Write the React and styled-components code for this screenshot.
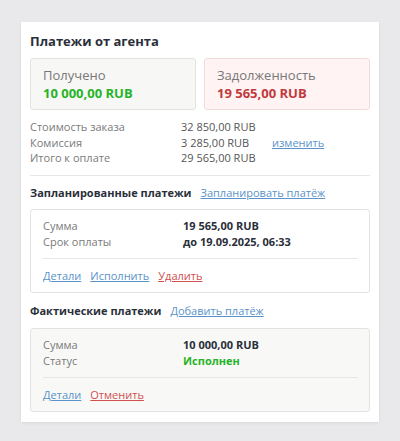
import React from "react";
import styled, {createGlobalStyle} from "styled-components";

const GlobalStyle = createGlobalStyle`
  body {
    margin: 0;
    background: #e9e9eb;
    font-family: "Open Sans", "Liberation Sans", sans-serif;
    color: #333;
  }
`;

const Page = styled.div`
  padding: 22px 21px;
  min-height: 441px;
  box-sizing: border-box;
`;

const Card = styled.div`
  background: #fff;
  width: 358px;
  box-sizing: border-box;
  padding: 10px 9px 10px 9px;
  box-shadow: 0 1px 3px rgba(0, 0, 0, 0.08);
`;

const Title = styled.h2`
  margin: 0 0 8px 0;
  font-size: 13px;
  line-height: 18px;
  font-weight: 700;
  color: #2a2f3a;
`;

const Summary = styled.div`
  display: grid;
  grid-template-columns: 1fr 1fr;
  gap: 8px;
`;

const SummaryBox = styled.div`
  height: 52px;
  box-sizing: border-box;
  padding: 7px 12px;
  border-radius: 3px;
  border: 1px solid ${p => (p.$debt ? "#f1dcdc" : "#e2e4e0")};
  background: ${p => (p.$debt ? "#fff3f3" : "#f7f8f6")};
`;

const SummaryLabel = styled.div`
  font-size: 13px;
  line-height: 18px;
  color: #777;
`;

const SummaryValue = styled.div`
  font-size: 13px;
  line-height: 18px;
  font-weight: 700;
  color: ${p => (p.$debt ? "#c1393c" : "#27b327")};
`;

const Totals = styled.div`
  display: grid;
  grid-template-columns: 151px 91px auto;
  margin-top: 9px;
  font-size: 11px;
  line-height: 15.5px;
`;

const Label = styled.span`
  color: #7a7a7a;
`;

const Value = styled.span`
  color: #555;
`;

const Link = styled.a`
  color: ${p => (p.$danger ? "#d0504f" : "#5a92c9")};
  text-decoration: underline;
  cursor: pointer;
`;

const Divider = styled.hr`
  border: none;
  border-top: 1px solid #e6e6e6;
  margin: ${p => p.$inner ? "8px 0 0" : "9px 0 0"};
`;

const SectionHead = styled.div`
  display: flex;
  align-items: baseline;
  gap: 9px;
  margin: ${p => p.$after ? "10px 0 9px" : "9px 0 8px"};
  font-size: 11px;
  line-height: 16px;
`;

const SectionTitle = styled.span`
  font-weight: 700;
  color: #2a2f3a;
`;

const PaymentBox = styled.div`
  border: 1px solid #e3e3e3;
  border-radius: 3px;
  background: ${p => (p.$done ? "#f8f9f7" : "#fff")};
  padding: 8px 11px 8px 12px;
  font-size: 11px;
  line-height: 16px;
`;

const PaymentRows = styled.div`
  display: grid;
  grid-template-columns: 140px auto;
`;

const Strong = styled.span`
  font-weight: 700;
  color: ${p => (p.$ok ? "#27b327" : "#2a2f3a")};
`;

const Actions = styled.div`
  display: flex;
  gap: 9px;
  margin-top: 9px;
`;

export default function App() {
  return (
    <Page>
      <GlobalStyle/>
      <Card>
        <Title>Платежи от агента</Title>
        <Summary>
          <SummaryBox>
            <SummaryLabel>Получено</SummaryLabel>
            <SummaryValue>10 000,00 RUB</SummaryValue>
          </SummaryBox>
          <SummaryBox $debt>
            <SummaryLabel>Задолженность</SummaryLabel>
            <SummaryValue $debt>19 565,00 RUB</SummaryValue>
          </SummaryBox>
        </Summary>

        <Totals>
          <Label>Стоимость заказа</Label>
          <Value>32 850,00 RUB</Value>
          <span/>
          <Label>Комиссия</Label>
          <Value>3 285,00 RUB</Value>
          <Link>изменить</Link>
          <Label>Итого к оплате</Label>
          <Value>29 565,00 RUB</Value>
          <span/>
        </Totals>

        <Divider/>

        <SectionHead>
          <SectionTitle>Запланированные платежи</SectionTitle>
          <Link>Запланировать платёж</Link>
        </SectionHead>
        <PaymentBox>
          <PaymentRows>
            <Label>Сумма</Label>
            <Strong>19 565,00 RUB</Strong>
            <Label>Срок оплаты</Label>
            <Strong>до 19.09.2025, 06:33</Strong>
          </PaymentRows>
          <Divider $inner/>
          <Actions>
            <Link>Детали</Link>
            <Link>Исполнить</Link>
            <Link $danger>Удалить</Link>
          </Actions>
        </PaymentBox>

        <SectionHead $after>
          <SectionTitle>Фактические платежи</SectionTitle>
          <Link>Добавить платёж</Link>
        </SectionHead>
        <PaymentBox $done>
          <PaymentRows>
            <Label>Сумма</Label>
            <Strong>10 000,00 RUB</Strong>
            <Label>Статус</Label>
            <Strong $ok>Исполнен</Strong>
          </PaymentRows>
          <Divider $inner/>
          <Actions>
            <Link>Детали</Link>
            <Link $danger>Отменить</Link>
          </Actions>
        </PaymentBox>
      </Card>
    </Page>
  );
}
